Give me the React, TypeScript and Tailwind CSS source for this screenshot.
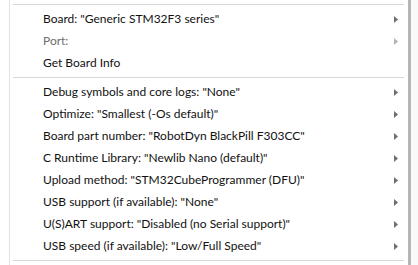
import React from 'react';

type Item = { label: string; sub?: boolean; disabled?: boolean };

const groupA: Item[] = [
  { label: 'Board: "Generic STM32F3 series"', sub: true },
  { label: 'Port:', sub: true, disabled: true },
  { label: 'Get Board Info' },
];

const groupB: Item[] = [
  { label: 'Debug symbols and core logs: "None"', sub: true },
  { label: 'Optimize: "Smallest (-Os default)"', sub: true },
  { label: 'Board part number: "RobotDyn BlackPill F303CC"', sub: true },
  { label: 'C Runtime Library: "Newlib Nano (default)"', sub: true },
  { label: 'Upload method: "STM32CubeProgrammer (DFU)"', sub: true },
  { label: 'USB support (if available): "None"', sub: true },
  { label: 'U(S)ART support: "Disabled (no Serial support)"', sub: true },
  { label: 'USB speed (if available): "Low/Full Speed"', sub: true },
];

function Separator() {
  return (
    <div className="h-[7px] flex items-center pl-[3px] pr-[4px]">
      <div className="h-px w-full bg-[#d7d7d7]" />
    </div>
  );
}

function Arrow({ disabled }: { disabled?: boolean }) {
  return (
    <svg width="4" height="7" viewBox="0 0 4 7" className="shrink-0">
      <path d="M0 0 L4 3.5 L0 7 Z" fill={disabled ? '#b4b4b4' : '#6f6f6f'} />
    </svg>
  );
}

function Row({ item }: { item: Item }) {
  return (
    <div className="h-[22px] flex items-center pl-[33px] pr-[10px]">
      <span className={`flex-1 whitespace-nowrap ${item.disabled ? 'text-[#6d6d6d]' : 'text-[#111111]'}`}>
        {item.label}
      </span>
      {item.sub && <Arrow disabled={item.disabled} />}
    </div>
  );
}

export default function App() {
  return (
    <div className="w-[418px] h-[265px] bg-[#f9f9f9] flex overflow-hidden text-[12px] leading-none font-['Lato',_'Noto_Sans',_sans-serif]">
      <div className="w-[411px] h-full bg-white flex border-r-[3px] border-[#b5b5b5]">
        <div className="w-[10px] border-r border-[#e2e2e2]" />
        <div className="flex-1 flex flex-col">
          <div className="h-[1px]" />
          <Separator />
          {groupA.map((it) => (
            <Row key={it.label} item={it} />
          ))}
          <Separator />
          {groupB.map((it) => (
            <Row key={it.label} item={it} />
          ))}
          <Separator />
        </div>
      </div>
    </div>
  );
}
